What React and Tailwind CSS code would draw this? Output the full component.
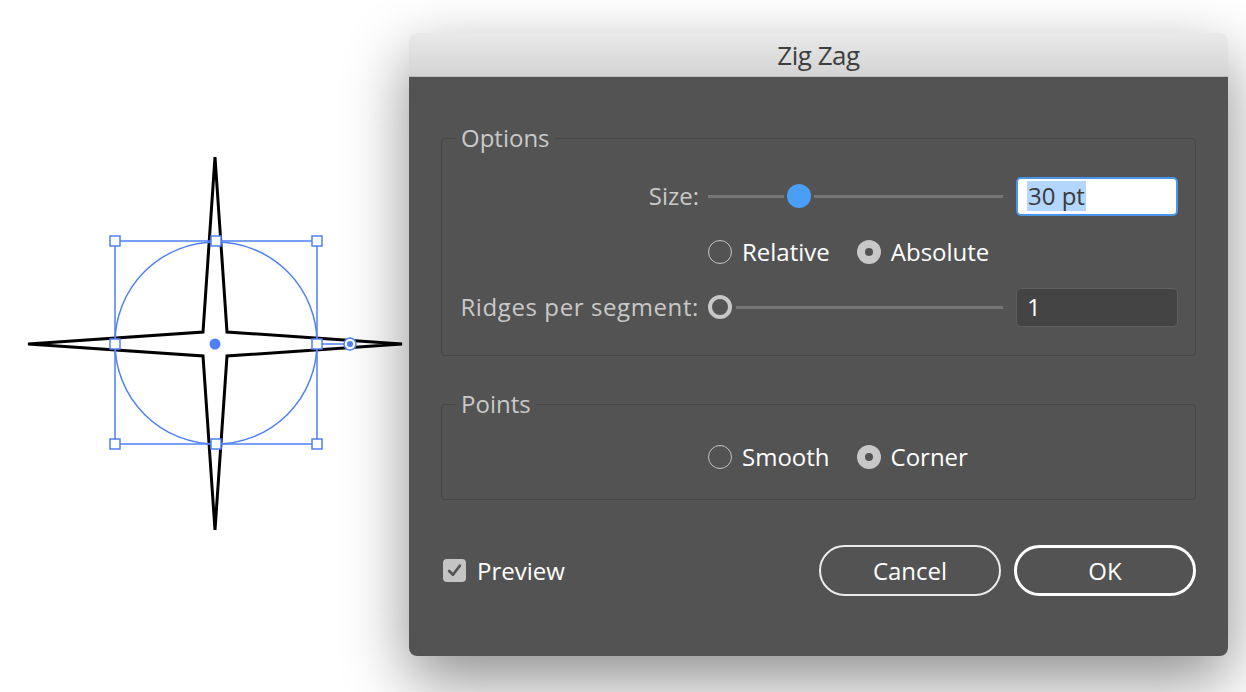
import React from "react";

const font = { fontFamily: '"Open Sans", "Liberation Sans", sans-serif' };

const Star = () => (
  <svg width="409" height="692" viewBox="0 0 409 692" className="block">
    <polygon
      points="215,157 227,332 402,344 227,356 215,530 203,356 28,344 203,332"
      fill="#fff"
      stroke="#000"
      strokeWidth="3"
      strokeLinejoin="miter"
    />
    <g stroke="#4f80f8" strokeWidth="1.5" fill="none">
      <rect x="115" y="241" width="202" height="203" />
      <circle cx="216" cy="343" r="101" />
      <line x1="317" y1="344" x2="344" y2="344" />
    </g>
    {[
      [115, 241], [216, 241], [317, 241],
      [115, 344], [317, 344],
      [115, 444], [216, 444], [317, 444],
    ].map(([x, y], i) => (
      <rect
        key={i}
        x={x - 5}
        y={y - 5}
        width="10"
        height="10"
        fill="#fff"
        stroke="#4f80f8"
        strokeWidth="1.5"
      />
    ))}
    <circle cx="215" cy="344" r="5.5" fill="#4f80f8" />
    <circle cx="350" cy="344" r="6" fill="#fff" stroke="#4f80f8" strokeWidth="1.5" />
    <circle cx="350" cy="344" r="3" fill="#4f80f8" />
  </svg>
);

const Radio = ({ label, checked }) => (
  <div className="flex items-center">
    {checked ? (
      <div className="w-[24px] h-[24px] rounded-full bg-[#c8c8c8] flex items-center justify-center">
        <div className="w-[8px] h-[8px] rounded-full bg-[#535353]" />
      </div>
    ) : (
      <div className="w-[24px] h-[24px] rounded-full border-[1.5px] border-[#c4c4c4]" />
    )}
    <span className="ml-[10px] text-[24px] leading-none text-white font-medium">{label}</span>
  </div>
);

const Fieldset = ({ legend, className, children }) => (
  <fieldset className={`border border-[#474747] rounded-[4px] ${className}`}>
    <legend className="ml-[14px] px-[5px] text-[24px] leading-[28px] text-[#c9c9c9] font-medium">
      {legend}
    </legend>
    {children}
  </fieldset>
);

export default function App() {
  return (
    <div
      className="w-[1246px] h-[692px] bg-white flex overflow-hidden"
      style={font}
    >
      <div className="w-[409px] shrink-0">
        <Star />
      </div>

      <div className="mt-[33px] w-[819px] h-[623px] shrink-0 flex flex-col rounded-[8px] shadow-[0_24px_64px_rgba(0,0,0,0.45)]">
        <div className="h-[44px] shrink-0 rounded-t-[8px] bg-gradient-to-b from-[#e9e9e9] to-[#d4d4d4] border-b border-[#b9b9b9] flex items-center justify-center">
          <span className="text-[26px] leading-none text-[#3e3e3e] tracking-[-0.5px]">Zig Zag</span>
        </div>

        <div className="flex-1 bg-[#535353] rounded-b-[8px] px-[32px] pt-[47px]">
          <Fieldset legend="Options" className="h-[232px]">
            {/* Size */}
            <div className="flex items-center h-[38px] mt-[25px]">
              <span className="w-[257px] text-right text-[24px] font-medium text-[#c9c9c9]">Size:</span>
              <div className="ml-[9px] w-[295px] flex items-center">
                <div className="w-[76px] h-[3px] bg-[#767676]" />
                <div className="mx-[3px] w-[24px] h-[24px] rounded-full bg-[#4a9ff5]" />
                <div className="flex-1 h-[3px] bg-[#767676]" />
              </div>
              <div className="ml-[13px] w-[162px] h-[39px] bg-white border-2 border-[#4a95ea] rounded-[5px] flex items-center pl-[9px]">
                <span className="bg-[#b3d6fd] text-[24px] leading-[30px] text-[#3a3a3a] px-[1px]">30 pt</span>
              </div>
            </div>
            {/* Relative / Absolute */}
            <div className="flex items-center h-[38px] mt-[18px] ml-[266px] gap-[27px]">
              <Radio label="Relative" />
              <Radio label="Absolute" checked />
            </div>
            {/* Ridges */}
            <div className="flex items-center h-[38px] mt-[17px]">
              <span className="w-[257px] text-right text-[24px] font-medium text-[#c9c9c9] whitespace-nowrap tracking-[0.6px]">
                Ridges per segment:
              </span>
              <div className="ml-[9px] w-[295px] flex items-center">
                <div className="w-[24px] h-[24px] rounded-full border-[4px] border-[#c8c8c8]" />
                <div className="ml-[4px] flex-1 h-[3px] bg-[#767676]" />
              </div>
              <div className="ml-[13px] w-[162px] h-[39px] bg-[#444444] border border-[#5f5f5f] rounded-[5px] flex items-center pl-[10px]">
                <span className="text-[24px] text-white">1</span>
              </div>
            </div>
          </Fieldset>

          <Fieldset legend="Points" className="mt-[34px] h-[110px]">
            <div className="flex items-center h-[38px] mt-[20px] ml-[266px] gap-[27px]">
              <Radio label="Smooth" />
              <Radio label="Corner" checked />
            </div>
          </Fieldset>

          <div className="flex items-center mt-[45px] h-[51px]">
            <div className="ml-[2px] w-[23px] h-[23px] rounded-[4px] bg-[#c4c4c4] flex items-center justify-center">
              <svg width="17" height="17" viewBox="0 0 16 16">
                <path d="M3 8.5 L6.5 12 L13 3.5" fill="none" stroke="#535353" strokeWidth="2.6" strokeLinecap="round" strokeLinejoin="round" />
              </svg>
            </div>
            <span className="ml-[11px] text-[24px] text-white font-medium">Preview</span>
            <div className="ml-auto flex gap-[13px]">
              <button className="w-[182px] h-[51px] rounded-full border-2 border-[#ececec] text-[24px] font-medium text-white">
                Cancel
              </button>
              <button className="w-[182px] h-[51px] rounded-full border-[3px] border-white text-[24px] font-medium text-white">
                OK
              </button>
            </div>
          </div>
        </div>
      </div>
    </div>
  );
}
